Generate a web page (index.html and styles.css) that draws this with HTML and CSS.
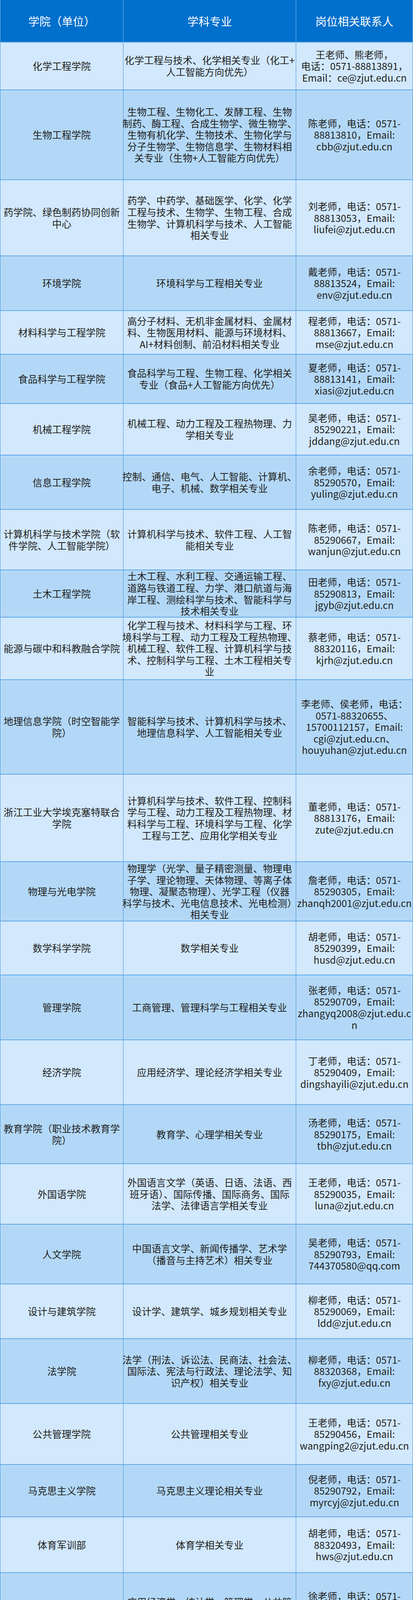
FILE: index.html
```html
<!DOCTYPE html>
<html lang="zh-CN">
<head>
<meta charset="utf-8">
<title>岗位相关联系人</title>
<link rel="stylesheet" href="styles.css">
</head>
<body>
<div class="table">
  <div class="row head" style="height:109px">
    <div class="cell"><p>学院（单位）</p></div>
    <div class="cell"><p>学科专业</p></div>
    <div class="cell"><p>岗位相关联系人</p></div>
  </div>

  <div class="row" style="height:122px">
    <div class="cell"><p>化学工程学院</p></div>
    <div class="cell"><p>化学工程与技术、化学相关专业（化工+<br>人工智能方向优先）</p></div>
    <div class="cell"><p>王老师、熊老师，<br>电话：0571-88813891，<br>Email：ce@zjut.edu.cn</p></div>
  </div>

  <div class="row" style="height:230px">
    <div class="cell"><p>生物工程学院</p></div>
    <div class="cell"><p>生物工程、生物化工、发酵工程、生物<br>制药、酶工程、合成生物学、微生物学、<br>生物有机化学、生物技术、生物化学与<br>分子生物学、生物信息学、生物材料相<br>关专业（生物+人工智能方向优先）</p></div>
    <div class="cell"><p>陈老师，电话：0571-<br>88813810，Email:<br>cbb@zjut.edu.cn</p></div>
  </div>

  <div class="row" style="height:195px">
    <div class="cell"><p>药学院、绿色制药协同创新<br>中心</p></div>
    <div class="cell"><p>药学、中药学、基础医学、化学、化学<br>工程与技术、生物学、生物工程、合成<br>生物学、计算机科学与技术、人工智能<br>相关专业</p></div>
    <div class="cell"><p>刘老师，电话：0571-<br>88813053，Email:<br>liufei@zjut.edu.cn</p></div>
  </div>

  <div class="row" style="height:140px">
    <div class="cell"><p>环境学院</p></div>
    <div class="cell"><p>环境科学与工程相关专业</p></div>
    <div class="cell"><p>戴老师，电话：0571-<br>88813524，Email:<br>env@zjut.edu.cn</p></div>
  </div>

  <div class="row" style="height:112px">
    <div class="cell"><p>材料科学与工程学院</p></div>
    <div class="cell"><p>高分子材料、无机非金属材料、金属材<br>料、生物医用材料、能源与环境材料、<br>AI+材料创制、前沿材料相关专业</p></div>
    <div class="cell"><p>程老师，电话：0571-<br>88813667，Email:<br>mse@zjut.edu.cn</p></div>
  </div>

  <div class="row" style="height:126px">
    <div class="cell"><p>食品科学与工程学院</p></div>
    <div class="cell"><p>食品科学与工程、生物工程、化学相关<br>专业（食品+人工智能方向优先）</p></div>
    <div class="cell"><p>夏老师，电话：0571-<br>88813141，Email:<br>xiasi@zjut.edu.cn</p></div>
  </div>

  <div class="row" style="height:132px">
    <div class="cell"><p>机械工程学院</p></div>
    <div class="cell"><p>机械工程、动力工程及工程热物理、力<br>学相关专业</p></div>
    <div class="cell"><p>吴老师，电话：0571-<br>85290221，Email:<br>jddang@zjut.edu.cn</p></div>
  </div>

  <div class="row" style="height:139px">
    <div class="cell"><p>信息工程学院</p></div>
    <div class="cell"><p>控制、通信、电气、人工智能、计算机、<br>电子、机械、数学相关专业</p></div>
    <div class="cell"><p>余老师，电话：0571-<br>85290570，Email:<br>yuling@zjut.edu.cn</p></div>
  </div>

  <div class="row" style="height:155px">
    <div class="cell"><p>计算机科学与技术学院（软<br>件学院、人工智能学院）</p></div>
    <div class="cell"><p>计算机科学与技术、软件工程、人工智<br>能相关专业</p></div>
    <div class="cell"><p>陈老师，电话：0571-<br>85290667，Email:<br>wanjun@zjut.edu.cn</p></div>
  </div>

  <div class="row" style="height:121px">
    <div class="cell"><p>土木工程学院</p></div>
    <div class="cell"><p>土木工程、水利工程、交通运输工程、<br>道路与铁道工程、力学、港口航道与海<br>岸工程、测绘科学与技术、智能科学与<br>技术相关专业</p></div>
    <div class="cell"><p>田老师，电话：0571-<br>85290813，Email:<br>jgyb@zjut.edu.cn</p></div>
  </div>

  <div class="row" style="height:160px">
    <div class="cell"><p>能源与碳中和科教融合学院</p></div>
    <div class="cell"><p>化学工程与技术、材料科学与工程、环<br>境科学与工程、动力工程及工程热物理、<br>机械工程、软件工程、计算机科学与技<br>术、控制科学与工程、土木工程相关专<br>业</p></div>
    <div class="cell"><p>蔡老师，电话：0571-<br>88320116，Email:<br>kjrh@zjut.edu.cn</p></div>
  </div>

  <div class="row" style="height:242px">
    <div class="cell"><p>地理信息学院（时空智能学<br>院）</p></div>
    <div class="cell"><p>智能科学与技术、计算机科学与技术、<br>地理信息科学、人工智能相关专业</p></div>
    <div class="cell"><p>李老师、侯老师，电话：<br>0571-88320655、<br>15700112157，Email:<br>cgi@zjut.edu.cn、<br>houyuhan@zjut.edu.cn</p></div>
  </div>

  <div class="row" style="height:224px">
    <div class="cell"><p>浙江工业大学埃克塞特联合<br>学院</p></div>
    <div class="cell"><p>计算机科学与技术、软件工程、控制科<br>学与工程、动力工程及工程热物理、材<br>料科学与工程、环境科学与工程、化学<br>工程与工艺、应用化学相关专业</p></div>
    <div class="cell"><p>董老师，电话：0571-<br>88813176，Email:<br>zute@zjut.edu.cn</p></div>
  </div>

  <div class="row" style="height:152px">
    <div class="cell"><p>物理与光电学院</p></div>
    <div class="cell"><p>物理学（光学、量子精密测量、物理电<br>子学、理论物理、天体物理、等离子体<br>物理、凝聚态物理）、光学工程（仪器<br>科学与技术、光电信息技术、光电检测）<br>相关专业</p></div>
    <div class="cell"><p>詹老师，电话：0571-<br>85290305，Email:<br>zhanqh2001@zjut.edu.cn</p></div>
  </div>

  <div class="row" style="height:138px">
    <div class="cell"><p>数学科学学院</p></div>
    <div class="cell"><p>数学相关专业</p></div>
    <div class="cell"><p>胡老师，电话：0571-<br>85290399，Email:<br>husd@zjut.edu.cn</p></div>
  </div>

  <div class="row" style="height:166px">
    <div class="cell"><p>管理学院</p></div>
    <div class="cell"><p>工商管理、管理科学与工程相关专业</p></div>
    <div class="cell"><p>张老师，电话：0571-<br>85290709，Email:<br>zhangyq2008@zjut.edu.c<br>n</p></div>
  </div>

  <div class="row" style="height:166px">
    <div class="cell"><p>经济学院</p></div>
    <div class="cell"><p>应用经济学、理论经济学相关专业</p></div>
    <div class="cell"><p>丁老师，电话：0571-<br>85290409，Email:<br>dingshayili@zjut.edu.cn</p></div>
  </div>

  <div class="row" style="height:151px">
    <div class="cell"><p>教育学院（职业技术教育学<br>院）</p></div>
    <div class="cell"><p>教育学、心理学相关专业</p></div>
    <div class="cell"><p>汤老师，电话：0571-<br>85290175，Email:<br>tbh@zjut.edu.cn</p></div>
  </div>

  <div class="row" style="height:155px">
    <div class="cell"><p>外国语学院</p></div>
    <div class="cell"><p>外国语言文学（英语、日语、法语、西<br>班牙语）、国际传播、国际商务、国际<br>法学、法律语言学相关专业</p></div>
    <div class="cell"><p>王老师，电话：0571-<br>85290035，Email:<br>luna@zjut.edu.cn</p></div>
  </div>

  <div class="row" style="height:153px">
    <div class="cell"><p>人文学院</p></div>
    <div class="cell"><p>中国语言文学、新闻传播学、艺术学<br>（播音与主持艺术）相关专业</p></div>
    <div class="cell"><p>吴老师，电话：0571-<br>85290793，Email:<br>744370580@qq.com</p></div>
  </div>

  <div class="row" style="height:140px">
    <div class="cell"><p>设计与建筑学院</p></div>
    <div class="cell"><p>设计学、建筑学、城乡规划相关专业</p></div>
    <div class="cell"><p>柳老师，电话：0571-<br>85290069，Email:<br>ldd@zjut.edu.cn</p></div>
  </div>

  <div class="row" style="height:166px">
    <div class="cell"><p>法学院</p></div>
    <div class="cell"><p>法学（刑法、诉讼法、民商法、社会法、<br>国际法、宪法与行政法、理论法学、知<br>识产权）相关专业</p></div>
    <div class="cell"><p>柳老师，电话：0571-<br>88320368，Email:<br>fxy@zjut.edu.cn</p></div>
  </div>

  <div class="row" style="height:156px">
    <div class="cell"><p>公共管理学院</p></div>
    <div class="cell"><p>公共管理相关专业</p></div>
    <div class="cell"><p>王老师，电话：0571-<br>85290456，Email:<br>wangping2@zjut.edu.cn</p></div>
  </div>

  <div class="row" style="height:134px">
    <div class="cell"><p>马克思主义学院</p></div>
    <div class="cell"><p>马克思主义理论相关专业</p></div>
    <div class="cell"><p>倪老师，电话：0571-<br>85290792，Email:<br>myrcyj@zjut.edu.cn</p></div>
  </div>

  <div class="row" style="height:143px">
    <div class="cell"><p>体育军训部</p></div>
    <div class="cell"><p>体育学相关专业</p></div>
    <div class="cell"><p>胡老师，电话：0571-<br>88320493，Email:<br>hws@zjut.edu.cn</p></div>
  </div>

  <div class="row" style="height:179px">
    <div class="cell"><p>全球浙商发展研究院</p></div>
    <div class="cell"><p>应用经济学、统计学、管理学、公共管<br>理、金融学、政治学相关专业</p></div>
    <div class="cell"><p>徐老师，电话：0571-<br>85290571，Email:<br>xlj@zjut.edu.cn</p></div>
  </div>

  <div class="row" style="height:160px">
    <div class="cell"><p>中国中小企业研究院</p></div>
    <div class="cell"><p>工商管理、公共管理相关专业</p></div>
    <div class="cell"><p>王老师，电话：0571-<br>85290710，Email:<br>wangxiali@zjut.edu.cn</p></div>
  </div>

  <div class="row" style="height:130px">
    <div class="cell"><p>激光先进制造研究院</p></div>
    <div class="cell"><p>机械工程、材料工程、光学工程相关专<br>业</p></div>
    <div class="cell"><p>曹老师，电话：0571-<br>85290864，Email:<br>caohui@zjut.edu.cn</p></div>
  </div>

  <div class="row" style="height:180px">
    <div class="cell"><p>工业设计研究院</p></div>
    <div class="cell"><p>设计学（工业设计）、机械工程（机械<br>制造及其自动化）、控制科学与工程、<br>计算机科学与技术（人工智能设计）、<br>管理学、应用经济学相关专业</p></div>
    <div class="cell"><p>周老师，电话：0571-<br>85290249，Email:<br>zhouzhen@zjut.edu.cn</p></div>
  </div>

  <div class="row" style="height:178px">
    <div class="cell"><p>网络空间安全研究院</p></div>
    <div class="cell"><p>控制科学与工程、信息与通信工程、计<br>算机科学与技术、软件工程相关专业</p></div>
    <div class="cell"><p>王老师，电话：0571-<br>85290534，Email:<br>wangsh@zjut.edu.cn</p></div>
  </div>

  <div class="row" style="height:159px">
    <div class="cell"><p>中国住房和房地产研究院</p></div>
    <div class="cell"><p>工商管理（住房经济与住房政策、城市<br>发展管理）相关专业</p></div>
    <div class="cell"><p>王老师，电话：0571-<br>88320987，Email:<br>wangsong@zjut.edu.cn</p></div>
  </div>

  <div class="row" style="height:170px">
    <div class="cell"><p>浙江碳中和创新研究院</p></div>
    <div class="cell"><p>环境科学与工程、大气科学、材料科学<br>与工程、化学、化学工程与技术、自然<br>地理学相关专业</p></div>
    <div class="cell"><p>何老师，电话：0571-<br>88813200，Email:<br>zcnii@zjut.edu.cn</p></div>
  </div>

  <div class="row" style="height:137px">
    <div class="cell"><p>先进技术研究院（前沿交叉<br>科学研究院）</p></div>
    <div class="cell"><p>计算机科学与技术、控制科学与工程、<br>生物医学工程、智能科学与技术、地球<br>物理相关专业</p></div>
    <div class="cell"><p>李老师，电话：0571-<br>88320404，Email:<br>qyjc@zjut.edu.cn</p></div>
  </div>

  <div class="row" style="height:177px">
    <div class="cell"><p>南宋古都研究院</p></div>
    <div class="cell"><p>中国语言文学、历史学、考古学、建筑<br>史、地理信息科学相关专业</p></div>
    <div class="cell"><p>郭老师，电话：0571-<br>88320432，Email:<br>guochenhui@zjut.edu.cn</p></div>
  </div>

  <div class="row" style="height:174px">
    <div class="cell"><p>人工智能与机器人研究院</p></div>
    <div class="cell"><p>计算机科学与技术、软件工程、人工智<br>能相关专业</p></div>
    <div class="cell"><p>陈老师，电话：0571-<br>85290667，Email:<br>wanjun@zjut.edu.cn</p></div>
  </div>
</div>
</body>
</html>
```

FILE: styles.css
```css
html, body {
  margin: 0;
  padding: 0;
  background: #ffffff;
}

body {
  font-family: "Noto Sans CJK SC", "Noto Sans", sans-serif;
  color: #1e1e1e;
}

.table {
  width: 1057px;
  display: block;
}

.row {
  display: grid;
  grid-template-columns: 316px 442px 299px;
  grid-template-rows: minmax(0, 1fr);
  box-sizing: border-box;
  border-bottom: 2px solid #5ea8e6;
  background: #d2e8fc;
  overflow: visible;
}

.row:nth-child(odd) {
  background: #b3d8f7;
}

.row.head {
  background: #0070cc;
  color: #ffffff;
  border-bottom: 2px solid #5ea8e6;
}

.cell {
  box-sizing: border-box;
  display: flex;
  flex-direction: column;
  justify-content: center;
  align-items: center;
  border-right: 1px solid #3d90d8;
  min-width: 0;
  min-height: 0;
}

.cell:first-child {
  border-left: 1px solid #3d90d8;
}

.head .cell {
  border-right-color: #7fbaf0;
}

.head .cell:first-child {
  border-left-color: #7fbaf0;
}

.cell p {
  margin: 0;
  flex: none;
  white-space: nowrap;
  text-align: center;
  font-size: 24.8px;
  line-height: 29.6px;
}

.head .cell p {
  font-size: 28.5px;
  line-height: 34px;
}
```
